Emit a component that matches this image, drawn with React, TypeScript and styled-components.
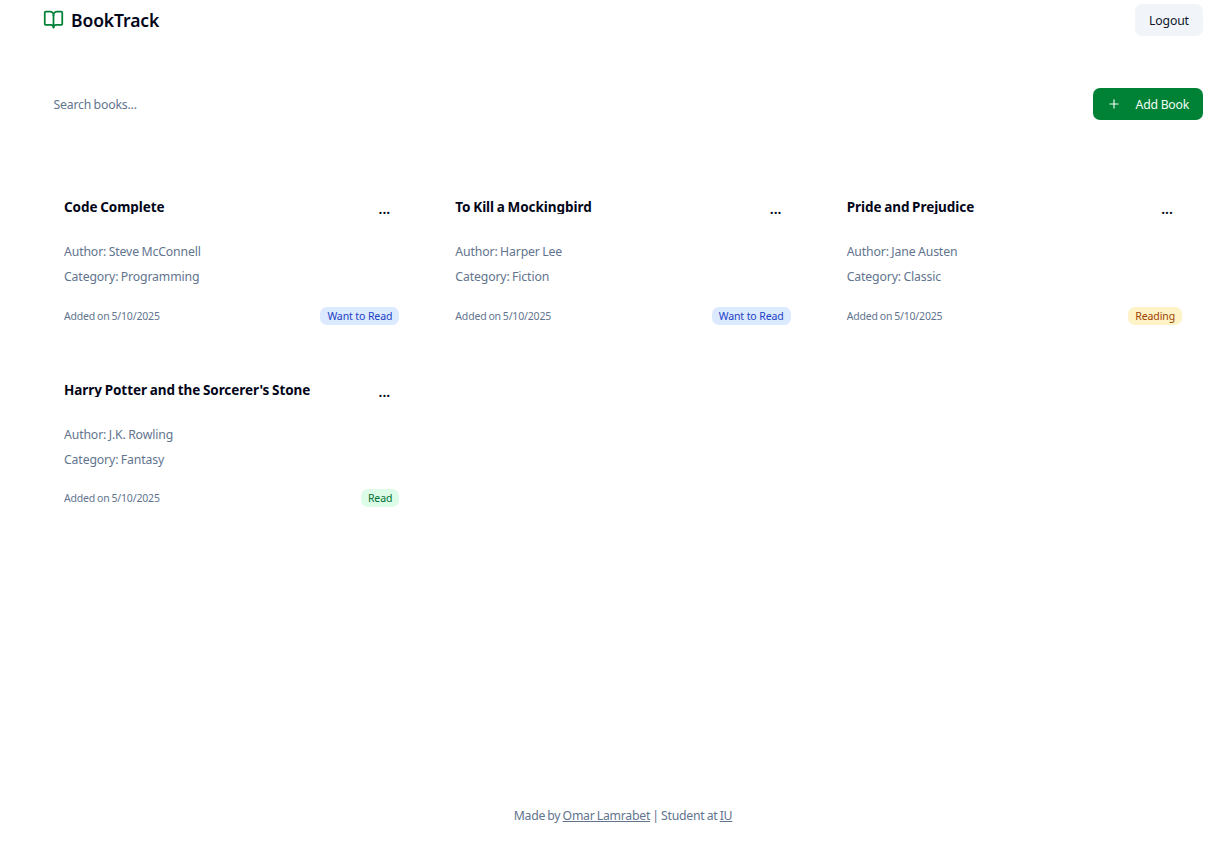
import React from "react";
import styled, { createGlobalStyle } from "styled-components";
import { BookOpen, Plus } from "lucide-react";

const GlobalStyle = createGlobalStyle`
  *, *::before, *::after { box-sizing: border-box; }
  html { font-size: 14px; }
  body {
    margin: 0;
    background: #fff;
    color: #020618;
    font-family: "Noto Sans", system-ui, sans-serif;
    line-height: 1.5;
  }
  h1, h2, p { margin: 0; }
  button, input { font: inherit; }
`;

const Page = styled.div`
  display: flex;
  flex-direction: column;
  min-height: 841px;
  padding: 4px 4px 0 43px;
`;

const Bar = styled.div`
  display: flex;
  align-items: center;
  justify-content: space-between;
  height: 32px;
`;

const Toolbar = styled(Bar)`
  margin-top: 52px;
`;

const Brand = styled.div`
  display: flex;
  align-items: center;
  gap: 7px;
  svg { color: #008236; margin-bottom: 1px; }
`;

const BrandName = styled.h1`
  font-size: 17.5px;
  font-weight: 600;
  letter-spacing: -0.1px;
  line-height: 24.5px;
`;

const Button = styled.button<{ $primary?: boolean }>`
  display: inline-flex;
  align-items: center;
  justify-content: space-between;
  width: ${(p) => (p.$primary ? "110px" : "68px")};
  height: 32px;
  padding: 0 14px;
  border: 0;
  border-radius: 7px;
  font-size: 12.25px;
  line-height: 18px;
  letter-spacing: ${(p) => (p.$primary ? "-0.25px" : "-0.15px")};
  white-space: nowrap;
  color: ${(p) => (p.$primary ? "#f0fdf4" : "#0f172b")};
  background: ${(p) => (p.$primary ? "#008236" : "#f1f5f9")};
`;

const ButtonLabel = styled.span`
  padding-top: 2px;
`;

const Search = styled.input`
  width: 336px;
  height: 32px;
  padding: 0 10.4px;
  border: 0;
  outline: 0;
  background: transparent;
  font-size: 12.25px;
  letter-spacing: -0.17px;
  word-spacing: -0.6px;
  &::placeholder { color: #62748e; opacity: 1; }
`;

const Grid = styled.main`
  display: grid;
  grid-template-columns: repeat(3, minmax(0, 1fr));
  gap: 14px;
  margin-top: 59px;
`;

const Card = styled.article`
  height: 168.75px;
  padding: 21px;
`;

const CardHead = styled.div`
  display: flex;
  justify-content: space-between;
`;

const Title = styled.h2`
  height: 14px;
  overflow: hidden;
  font-size: 13.5px;
  font-weight: 700;
  letter-spacing: -0.06px;
  line-height: 14px;
  word-spacing: -0.7px;
  white-space: nowrap;
`;

const Menu = styled.button`
  width: 32px;
  height: 31.5px;
  margin: -7px -1px 0 0;
  padding: 0;
  border: 0;
  background: transparent;
  color: inherit;
  font-size: 14px;
  font-weight: 600;
`;

const Meta = styled.div`
  display: grid;
  gap: 7px;
  margin-top: 18.3px;
  color: #62748e;
  font-size: 12.25px;
  letter-spacing: -0.13px;
  word-spacing: -0.6px;
  line-height: 18px;
`;

const CardFoot = styled.div`
  display: flex;
  align-items: center;
  justify-content: space-between;
  height: 18px;
  margin-top: 20.8px;
  color: #62748e;
  font-size: 10.5px;
  letter-spacing: -0.18px;
  word-spacing: -0.6px;
  line-height: 18px;
`;

const tones = {
  "Want to Read": ["#dbeafe", "#1b40c4"],
  Reading: ["#fef3c6", "#a04200"],
  Read: ["#dcfce7", "#017034"],
} as const;
type Status = keyof typeof tones;

const Badge = styled.span<{ $status: Status }>`
  padding: 0 7px;
  border-radius: 7px;
  letter-spacing: -0.1px;
  word-spacing: 0;
  background: ${(p) => tones[p.$status][0]};
  color: ${(p) => tones[p.$status][1]};
`;

const Footer = styled.footer`
  margin-top: auto;
  padding-bottom: 17px;
  text-align: center;
  color: #62748e;
  font-size: 12.25px;
  letter-spacing: -0.25px;
  word-spacing: -0.7px;
  line-height: 17.5px;
  a { color: inherit; text-decoration: underline; }
`;

const books: { title: string; author: string; category: string; status: Status }[] = [
  { title: "Code Complete", author: "Steve McConnell", category: "Programming", status: "Want to Read" },
  { title: "To Kill a Mockingbird", author: "Harper Lee", category: "Fiction", status: "Want to Read" },
  { title: "Pride and Prejudice", author: "Jane Austen", category: "Classic", status: "Reading" },
  { title: "Harry Potter and the Sorcerer's Stone", author: "J.K. Rowling", category: "Fantasy", status: "Read" },
];

export default function App() {
  return (
    <Page>
      <GlobalStyle />
      <Bar as="header">
        <Brand>
          <BookOpen size={21} />
          <BrandName>BookTrack</BrandName>
        </Brand>
        <Button>
          <ButtonLabel>Logout</ButtonLabel>
        </Button>
      </Bar>
      <Toolbar>
        <Search placeholder="Search books..." />
        <Button $primary>
          <Plus size={14} />
          <ButtonLabel>Add Book</ButtonLabel>
        </Button>
      </Toolbar>
      <Grid>
        {books.map((book) => (
          <Card key={book.title}>
            <CardHead>
              <Title>{book.title}</Title>
              <Menu>...</Menu>
            </CardHead>
            <Meta>
              <p>Author: {book.author}</p>
              <p>Category: {book.category}</p>
            </Meta>
            <CardFoot>
              <span>Added on 5/10/2025</span>
              <Badge $status={book.status}>{book.status}</Badge>
            </CardFoot>
          </Card>
        ))}
      </Grid>
      <Footer>
        Made by <a href="#">Omar Lamrabet</a> | Student at <a href="#">IU</a>
      </Footer>
    </Page>
  );
}
